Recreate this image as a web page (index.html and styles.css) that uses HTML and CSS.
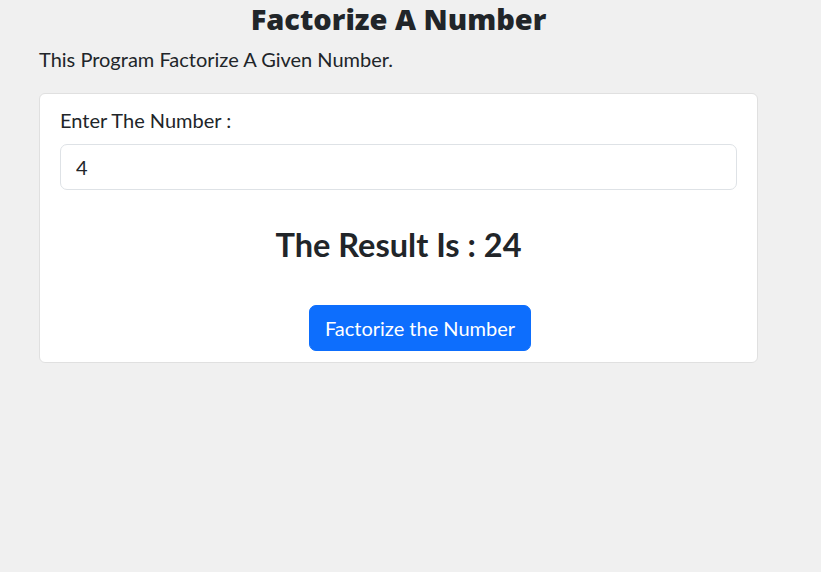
FILE: index.html
```html
<!DOCTYPE html>
<html>
<head>
<meta charset="utf-8">
<link rel="stylesheet" href="styles.css">
</head>
<body>
<main class="page">
  <h1 class="title">Factorize A Number</h1>
  <p class="intro">This Program Factorize A Given Number.</p>
  <section class="card">
    <label class="label" for="num">Enter The Number :</label>
    <input class="input" id="num" type="text" value="4">
    <h3 class="result">The Result Is : 24</h3>
    <div class="actions">
      <button class="btn">Factorize the Number</button>
    </div>
  </section>
</main>
</body>
</html>
```
FILE: styles.css
```css
html, body {
  margin: 0;
  padding: 0;
  background: #f0f0f0;
}
body {
  font-family: Lato, "Noto Sans", sans-serif;
  color: #212529;
  font-size: 20px;
  line-height: 1.5;
}
.page {
  width: 719px;
  margin-left: 39px;
  padding-top: 2px;
  display: flex;
  flex-direction: column;
}
.title {
  margin: 0;
  text-align: center;
  font-family: "Noto Sans", Lato, sans-serif;
  font-size: 29px;
  font-weight: 900;
  line-height: 34px;
}
.intro {
  margin: 8px 0 19px;
  line-height: 30px;
}
.card {
  background: #fff;
  border: 1px solid #e0e0e0;
  border-radius: 6px;
  padding: 11px 20px 11px;
  display: flex;
  flex-direction: column;
}
.label {
  line-height: 30px;
  margin-bottom: 9px;
}
.input {
  font: inherit;
  color: #212529;
  height: 46px;
  box-sizing: border-box;
  border: 1px solid #dee2e6;
  border-radius: 7px;
  padding: 0 15px;
  outline: none;
}
.result {
  margin: 36px 0 0;
  text-align: center;
  font-size: 32.5px;
  font-weight: 700;
  line-height: 38px;
}
.actions {
  display: flex;
  justify-content: center;
  margin-top: 41px;
  padding-left: 43px;
}
.btn {
  font: inherit;
  background: #0d6efd;
  color: #fff;
  border: 1px solid #0d6efd;
  border-radius: 7px;
  height: 46px;
  padding: 0 15px;
}
```
